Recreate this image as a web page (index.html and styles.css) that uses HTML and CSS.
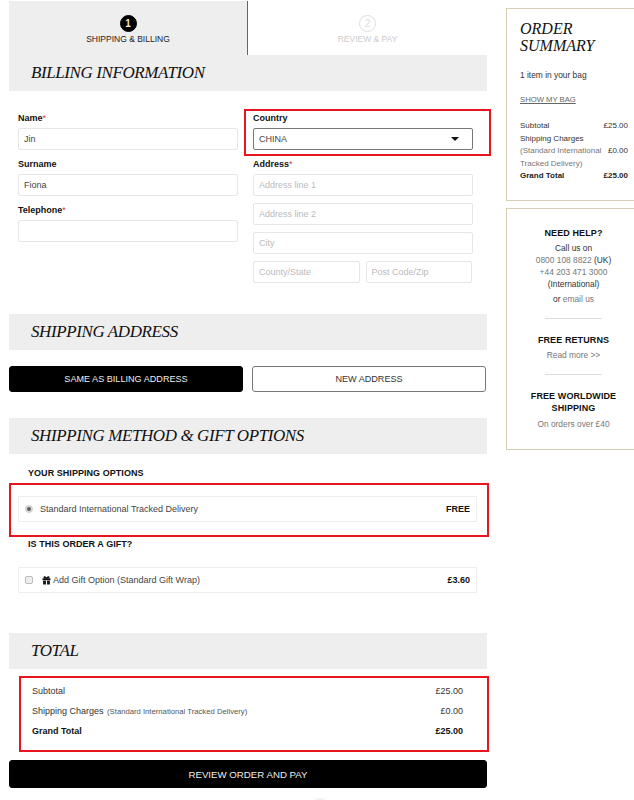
FILE: index.html
```html
<!DOCTYPE html>
<html lang="en">
<head>
    <meta charset="UTF-8">
    <meta name="viewport" content="width=device-width, initial-scale=1.0">
    <title>Checkout</title>
    <link rel="stylesheet" href="styles.css">
</head>
<body>
    <div class="page">
        <main class="checkout">
            <div class="steps">
                <div class="step step-active">
                    <span class="step-num">1</span>
                    <span class="step-name">SHIPPING &amp; BILLING</span>
                </div>
                <div class="step">
                    <span class="step-num">2</span>
                    <span class="step-name">REVIEW &amp; PAY</span>
                </div>
            </div>

            <h2 class="section-head">BILLING INFORMATION</h2>
            <div class="billing-form">
                <div class="form-col">
                    <label class="field-label">Name<span class="req">*</span></label>
                    <input class="text-input" type="text" value="Jin">
                    <label class="field-label">Surname</label>
                    <input class="text-input" type="text" value="Fiona">
                    <label class="field-label">Telephone<span class="req">*</span></label>
                    <input class="text-input" type="text">
                </div>
                <div class="form-col">
                    <div class="marked marked-country">
                        <label class="field-label">Country</label>
                        <div class="select-box">
                            <span>CHINA</span>
                            <span class="select-arrow"></span>
                        </div>
                    </div>
                    <label class="field-label">Address<span class="req">*</span></label>
                    <div class="address-lines">
                        <input class="text-input" type="text" placeholder="Address line 1">
                        <input class="text-input" type="text" placeholder="Address line 2">
                        <input class="text-input" type="text" placeholder="City">
                        <div class="address-split">
                            <input class="text-input" type="text" placeholder="County/State">
                            <input class="text-input" type="text" placeholder="Post Code/Zip">
                        </div>
                    </div>
                </div>
            </div>

            <h2 class="section-head">SHIPPING ADDRESS</h2>
            <div class="address-buttons">
                <button class="btn btn-dark">SAME AS BILLING ADDRESS</button>
                <button class="btn btn-light">NEW ADDRESS</button>
            </div>

            <h2 class="section-head">SHIPPING METHOD &amp; GIFT OPTIONS</h2>
            <h3 class="option-title">YOUR SHIPPING OPTIONS</h3>
            <div class="marked marked-shipping">
                <div class="option-row">
                    <span class="radio-mark"></span>
                    <span class="option-name">Standard International Tracked Delivery</span>
                    <strong class="option-price">FREE</strong>
                </div>
            </div>
            <h3 class="option-title option-title-gift">IS THIS ORDER A GIFT?</h3>
            <div class="option-row">
                <span class="check-mark"></span>
                <svg class="gift-icon" viewBox="0 0 16 16" width="9" height="9">
                    <path fill="#111" d="M1 4h14v3.500H1zM2 8.500h5V15H2zM9 8.500h5V15H9zM7 4h2v3.500H7z"/>
                    <path fill="none" stroke="#111" stroke-width="1.800" d="M8 4C6 .5 2.800.5 3.600 2.600 4 3.800 6 4 8 4c2 0 4-.2 4.400-1.400C13.200.5 10 .5 8 4z"/>
                </svg>
                <span class="option-name">Add Gift Option (Standard Gift Wrap)</span>
                <strong class="option-price">£3.60</strong>
            </div>

            <h2 class="section-head section-head-total">TOTAL</h2>
            <div class="marked marked-total">
                <div class="total-row"><span>Subtotal</span><span>£25.00</span></div>
                <div class="total-row"><span>Shipping Charges <small>(Standard International Tracked Delivery)</small></span><span>£0.00</span></div>
                <div class="total-row total-grand"><span>Grand Total</span><span>£25.00</span></div>
            </div>
            <button class="btn btn-dark btn-pay">REVIEW ORDER AND PAY</button>
            <div class="scroll-dot"></div>
        </main>

        <aside class="sidebar">
            <div class="side-box order-box">
                <h2 class="order-title">ORDER SUMMARY</h2>
                <p class="bag-count">1 item in your bag</p>
                <a class="bag-link" href="#">SHOW MY BAG</a>
                <table class="order-table">
                    <tr><td>Subtotal</td><td class="amount">£25.00</td></tr>
                    <tr><td>Shipping Charges<br><span class="muted">(Standard International Tracked Delivery)</span></td><td class="amount amount-mid">£0.00</td></tr>
                    <tr class="order-grand"><td>Grand Total</td><td class="amount">£25.00</td></tr>
                </table>
            </div>
            <div class="side-box help-box">
                <h4>NEED HELP?</h4>
                <p class="help-lines"><span class="dark">Call us on</span><br>0800 108 8822 <span class="dark">(UK)</span><br>+44 203 471 3000<br><span class="dark">(International)</span></p>
                <p class="help-mail"><span class="dark">or</span> email us</p>
                <hr>
                <h4>FREE RETURNS</h4>
                <p class="help-note">Read more &gt;&gt;</p>
                <hr>
                <h4>FREE WORLDWIDE SHIPPING</h4>
                <p class="help-note">On orders over £40</p>
            </div>
        </aside>
    </div>
</body>
</html>
```

FILE: styles.css
```css
/* page */
html, body {
    margin: 0;
    padding: 0;
}

body {
    background-color: #fff;
    font-family: "Liberation Sans", Arial, sans-serif;
    font-size: 9px;
    color: #333;
}

.page {
    display: flex;
    align-items: flex-start;
    width: 634px;
    height: 800px;
    box-sizing: border-box;
    padding: 1px 0 0 9px;
    overflow: hidden;
}

.checkout {
    width: 478px;
    flex-shrink: 0;
}

/* steps */
.steps {
    display: flex;
    height: 54px;
}

.step {
    width: 50%;
    display: flex;
    flex-direction: column;
    align-items: center;
    padding-top: 14px;
    box-sizing: border-box;
    color: #ccc;
}

.step-active {
    background-color: #eee;
    border-right: 1px solid #666;
    color: #222;
}

.step-num {
    width: 15px;
    height: 15px;
    border: 1px solid #ddd;
    border-radius: 50%;
    font-size: 10px;
    line-height: 15px;
    text-align: center;
    color: #ddd;
}

.step-active .step-num {
    background-color: #000;
    border-color: #000;
    color: #f3ecc8;
    font-weight: bold;
}

.step-name {
    margin-top: 1px;
    font-size: 8.500px;
    line-height: 12px;
}

/* section heads */
.section-head {
    margin: 0;
    height: 36px;
    padding-left: 22px;
    background-color: #eee;
    font-family: "Liberation Serif", "Times New Roman", serif;
    font-style: italic;
    font-weight: normal;
    font-size: 17px;
    letter-spacing: -0.4px;
    line-height: 35px;
    color: #111;
}

.section-head-total {
    margin-top: 40px;
}

/* billing form */
.billing-form {
    display: flex;
    gap: 15px;
    padding: 21px 14px 0 9px;
    height: 223px;
    box-sizing: border-box;
}

.form-col {
    width: 220px;
}

.field-label {
    display: block;
    height: 16px;
    margin-top: 8px;
    font-weight: bold;
    line-height: 12px;
    color: #111;
}

.form-col > .field-label:first-child,
.marked-country .field-label {
    margin-top: 0;
}

.req {
    color: #d33;
    font-weight: normal;
}

.text-input {
    display: block;
    width: 100%;
    height: 22px;
    box-sizing: border-box;
    margin: 0;
    padding: 0 5px;
    border: 1px solid #e6e6e6;
    border-radius: 2px;
    background-color: #fff;
    font-family: inherit;
    font-size: 9px;
    color: #444;
}

.text-input::placeholder {
    color: #bbb;
    opacity: 1;
}

.select-box {
    display: flex;
    justify-content: space-between;
    align-items: center;
    height: 22px;
    padding: 0 13px 0 5px;
    box-sizing: border-box;
    border: 1px solid #777;
    border-radius: 2px;
    color: #444;
}

.select-arrow {
    border-left: 4px solid transparent;
    border-right: 4px solid transparent;
    border-top: 4px solid #111;
}

.address-lines {
    display: flex;
    flex-direction: column;
    gap: 7px;
}

.address-split {
    display: flex;
    gap: 6px;
    padding-right: 1px;
}

.address-split .text-input {
    width: 50%;
}

/* red marks drawn over the content */
.marked {
    position: relative;
}

.marked::after {
    content: "";
    position: absolute;
    border: 2px solid #e8141f;
    pointer-events: none;
}

.marked-country::after {
    top: -3px;
    left: -9px;
    right: -18px;
    bottom: -6px;
}

.marked-shipping::after {
    top: -13px;
    left: 0;
    right: -2px;
    bottom: -15px;
}

.marked-total {
    margin: 7px -2px 8px 10px;
    padding: 8px 26px 0 13px;
    height: 76px;
    box-sizing: border-box;
}

.marked-total::after {
    inset: 0;
}

/* buttons */
.address-buttons {
    display: flex;
    justify-content: space-between;
    padding: 16px 1px 26px 0;
}

.btn {
    display: block;
    height: 26px;
    width: 234px;
    padding: 0;
    box-sizing: border-box;
    border-radius: 3px;
    font-family: inherit;
    font-size: 9.100px;
    cursor: pointer;
}

.btn-dark {
    background-color: #000;
    border: 1px solid #000;
    color: #eee;
}

.btn-light {
    background-color: #fff;
    border: 1px solid #777;
    color: #333;
}

.btn-pay {
    width: 100%;
    height: 28px;
    font-size: 9.700px;
}

/* shipping + gift options */
.option-title {
    margin: 13px 0 0 19px;
    height: 17px;
    font-size: 9px;
    line-height: 12px;
    letter-spacing: 0.05px;
    color: #111;
}

.option-title-gift {
    margin-top: 15px;
    height: 30px;
    line-height: 15px;
}

.option-row {
    display: flex;
    align-items: center;
    width: 459px;
    height: 26px;
    margin-left: 9px;
    margin-top: 12px;
    padding: 0 6px;
    box-sizing: border-box;
    border: 1px solid #eee;
    color: #444;
}

.option-title-gift + .option-row {
    margin-top: 0;
}

.radio-mark {
    width: 6px;
    height: 6px;
    margin-right: 7px;
    border: 1px solid #ccc;
    border-radius: 50%;
    background: radial-gradient(circle, #666 0 1.500px, #ddd 2.500px);
}

.check-mark {
    width: 6px;
    height: 6px;
    margin-right: 9px;
    border: 1px solid #bbb;
    border-radius: 2px;
    background-color: #eee;
}

.gift-icon {
    margin-right: 2px;
}

.option-price {
    margin-left: auto;
    color: #111;
}

/* totals */
.total-row {
    display: flex;
    justify-content: space-between;
    height: 20px;
    line-height: 14px;
}

.total-row small {
    font-size: 7.700px;
    margin-left: 1px;
    color: #555;
}

.total-grand {
    font-weight: bold;
    color: #111;
}

.scroll-dot {
    width: 18px;
    height: 18px;
    margin: 10px 0 0 302px;
    border-radius: 50%;
    background-color: #f0f0f0;
}

/* sidebar */
.sidebar {
    width: 128px;
    margin: 7px 0 0 19px;
    flex-shrink: 0;
}

.side-box {
    box-sizing: border-box;
    border: 1px solid #d5cdb5;
    border-right: 0;
}

.order-box {
    height: 193px;
    padding: 11px 0 0 13px;
    margin-bottom: 7px;
}

.order-title {
    width: 90px;
    margin: 0;
    font-family: "Liberation Serif", "Times New Roman", serif;
    font-style: italic;
    font-weight: normal;
    font-size: 16px;
    line-height: 17px;
    color: #111;
}

.bag-count {
    margin: 15px 0 0;
    font-size: 8.400px;
    line-height: 12px;
}

.bag-link {
    display: block;
    margin-top: 13px;
    font-size: 7.700px;
    line-height: 11px;
    color: #666;
}

.order-table {
    width: 108px;
    margin-top: 15px;
    border-collapse: collapse;
    font-size: 8px;
    line-height: 12.500px;
}

.order-table td {
    padding: 0;
    vertical-align: top;
}

.order-table .amount {
    text-align: right;
    white-space: nowrap;
}

.order-table .amount-mid {
    vertical-align: middle;
}

.muted {
    color: #777;
}

.order-grand {
    font-weight: bold;
    color: #222;
}

.help-box {
    height: 242px;
    padding: 18px 0 0 6px;
    text-align: center;
    color: #777;
    font-size: 8.400px;
    line-height: 12px;
}

.help-box h4 {
    margin: 0;
    font-size: 9px;
    line-height: 12px;
    letter-spacing: 0.1px;
    color: #111;
}

.help-box p {
    margin: 0;
}

.help-box hr {
    width: 57px;
    margin: 13px auto 15px;
    border: 0;
    border-top: 1px solid #ddd;
}

.help-lines {
    padding-top: 3px;
}

.help-mail {
    padding-top: 3px;
}

.help-box .help-note {
    padding-top: 3px;
}

.help-box .help-note:last-child {
    padding-top: 4px;
}

.dark {
    color: #333;
}
```
